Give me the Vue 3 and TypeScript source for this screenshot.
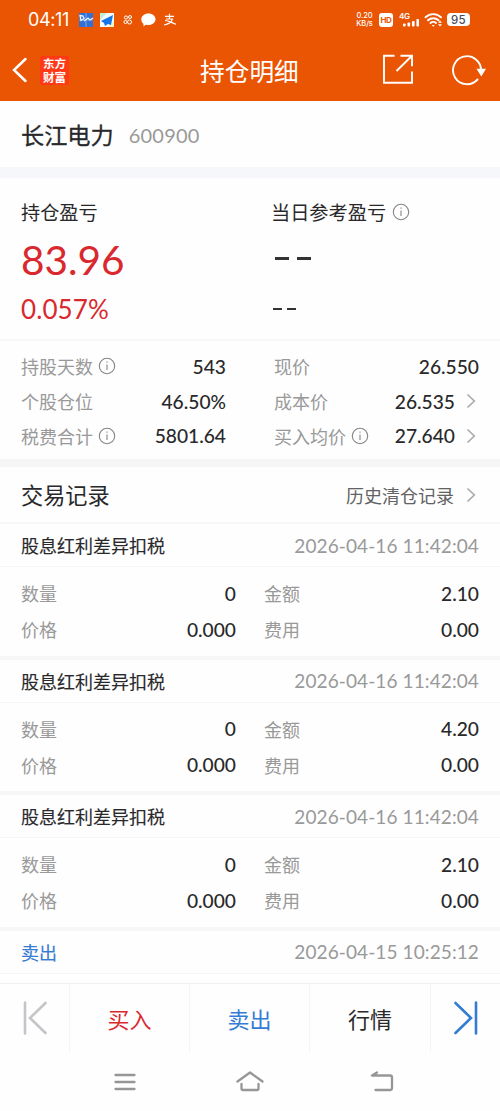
<script setup lang="ts">
interface Stat { label: string; value: string; info?: boolean; link?: boolean }
interface TradeRecord { title: string; time: string; amount: string }

const leftStats: Stat[] = [
  { label: '持股天数', value: '543', info: true },
  { label: '个股仓位', value: '46.50%' },
  { label: '税费合计', value: '5801.64', info: true },
]
const rightStats: Stat[] = [
  { label: '现价', value: '26.550' },
  { label: '成本价', value: '26.535', link: true },
  { label: '买入均价', value: '27.640', info: true, link: true },
]
const records: TradeRecord[] = [
  { title: '股息红利差异扣税', time: '2026-04-16 11:42:04', amount: '2.10' },
  { title: '股息红利差异扣税', time: '2026-04-16 11:42:04', amount: '4.20' },
  { title: '股息红利差异扣税', time: '2026-04-16 11:42:04', amount: '2.10' },
]
</script>

<template>
  <div class="screen">
    <header class="top">
      <div class="status">
        <span class="clock">04:11</span>
        <svg class="apps" width="100" height="16" viewBox="0 0 100 16">
          <rect x="0" y="1" width="14" height="14" fill="#3470d4" />
          <path d="M7 1v14M0 8h14" stroke="#7aa5ec" stroke-width="1" />
          <path d="M1 3.500l3 .5 1 2.500-3 2zM5 9l4-3 2 2 3-2" fill="none" stroke="#e8f5ff" stroke-width="1.300" />
          <rect x="21" y="1" width="14" height="14" fill="#f4fbff" />
          <path d="M21 1h7l-7 7z" fill="#bfefdc" /><path d="M29 15h6V9z" fill="#fff2b8" />
          <path d="M34 3L22 9l3 2 1 3 3-2 3 1z" fill="#1677e8" />
          <g fill="none" stroke="#fff" stroke-width="1">
            <circle cx="47" cy="5.500" r="1.600" /><circle cx="51" cy="5" r="1.500" />
            <circle cx="46.500" cy="10" r="1.600" /><circle cx="50.500" cy="10" r="2" />
          </g>
          <path d="M69.500 1.600c4 0 7 2.500 7 5.700s-3 5.800-7 5.800l-2.800-.3L64.500 14.500v-2.700c-1.400-1-2.200-2.600-2.200-4.300C62.300 4 65.500 1.600 69.500 1.600z" fill="#fff" />
          <path d="M86 4.300h9M90.500 1.800v5M87 7h6.500c-1 3-4 5.300-8.500 6M86 8.500c4 .2 7 2.500 11 3.800" fill="none" stroke="#fff" stroke-width="1.200" />
        </svg>
        <div class="speed"><span>0.20</span><span>KB/s</span></div>
        <span class="hd">HD</span>
        <div class="mobile">
          <span>4G</span>
          <svg width="20" height="15" viewBox="0 0 20 15" fill="#fff">
            <rect x="4" y="11.500" width="2.600" height="3" rx=".8" /><rect x="8.500" y="10.500" width="2.600" height="4" rx=".8" />
            <rect x="13" y="9" width="2.600" height="5.500" rx=".8" /><rect x="17.400" y="7" width="2.600" height="7.500" rx=".8" />
          </svg>
        </div>
        <svg class="wifi" width="20" height="16" viewBox="0 0 20 16">
          <g fill="none" stroke="#fff" stroke-width="1.900" stroke-linecap="round">
            <path d="M1.500 5.300c4.500-4.300 11-4.300 15.500 0M4 8.300c3-2.800 7.500-2.800 10.500 0M6.500 11c1.500-1.500 4-1.500 5.500 0" />
          </g>
          <path d="M7.600 13h3.300l-1.600 1.800zM14 10.800l2-2.200 2 2.200zM14 12.300l2 2.200 2-2.200z" fill="#fff" />
        </svg>
        <span class="battery">95</span>
      </div>
      <div class="nav">
        <svg class="back" width="16" height="26" viewBox="0 0 16 26"><path d="M13.500 2L2 13l11.500 11" fill="none" stroke="#fff" stroke-width="2.500" stroke-linecap="round" /></svg>
        <div class="brand"><span>东方</span><span>财富</span></div>
        <h1>持仓明细</h1>
        <svg class="share" width="32" height="32" viewBox="0 0 32 32" fill="none" stroke="#fff" stroke-width="1.900">
          <path d="M12.500 1.700H2v27h28V17.500M18.500 1.700H30v10.500M29.500 2.200L14.500 17" />
        </svg>
        <svg class="refresh" width="36" height="32" viewBox="0 0 36 32">
          <path d="M30 17A14 14 0 1 0 26.500 25.500" fill="none" stroke="#fff" stroke-width="1.900" stroke-linecap="round" />
          <path d="M25.500 14.800h9.500l-4.700 7.700z" fill="#fff" />
        </svg>
      </div>
    </header>

    <section class="stock"><b>长江电力</b><span>600900</span></section>

    <section class="profit">
      <div>
        <p class="caption">持仓盈亏</p>
        <p class="gain">83.96</p>
        <p class="rate">0.057%</p>
      </div>
      <div>
        <p class="caption">当日参考盈亏
          <svg class="info" width="18" height="18" viewBox="0 0 18 18"><circle cx="9" cy="9" r="7.700" /><path d="M9 7.500v5.500M9 4.500v1.300" /></svg>
        </p>
        <p class="dash big"><i></i><i></i></p>
        <p class="dash"><i></i><i></i></p>
      </div>
    </section>

    <section class="stats">
      <div v-for="(col, c) in [leftStats, rightStats]" :key="c" class="stat-col">
        <div v-for="s in col" :key="s.label" class="stat">
          <span class="label">{{ s.label }}</span>
          <svg v-if="s.info" class="info" width="18" height="18" viewBox="0 0 18 18"><circle cx="9" cy="9" r="7.700" /><path d="M9 7.500v5.500M9 4.500v1.300" /></svg>
          <span class="value">{{ s.value }}</span>
          <svg v-if="s.link" class="chev" width="10" height="16" viewBox="0 0 10 16"><path d="M1.500 1.500L8.300 8l-6.800 6.500" /></svg>
        </div>
      </div>
    </section>

    <section class="history">
      <h2>交易记录</h2>
      <span>历史清仓记录</span>
      <svg class="chev" width="10" height="16" viewBox="0 0 10 16"><path d="M1.500 1.500L8.300 8l-6.800 6.500" /></svg>
    </section>

    <main class="records">
      <article v-for="(r, i) in records" :key="i" class="record">
        <div class="record-head"><b>{{ r.title }}</b><time>{{ r.time }}</time></div>
        <dl>
          <dt>数量</dt><dd>0</dd><dt>金额</dt><dd>{{ r.amount }}</dd>
          <dt>价格</dt><dd>0.000</dd><dt>费用</dt><dd>0.00</dd>
        </dl>
      </article>
      <article class="record">
        <div class="record-head sell"><b>卖出</b><time>2026-04-15 10:25:12</time></div>
      </article>
    </main>

    <footer class="actions">
      <div class="edge"><svg width="26" height="36" viewBox="0 0 26 36"><path d="M3 2.500v31M23.500 3L8 18l15.500 15" stroke="#c4c5c9" /></svg></div>
      <div class="buy">买入</div>
      <div class="sell">卖出</div>
      <div>行情</div>
      <div class="edge"><svg width="26" height="36" viewBox="0 0 26 36"><path d="M23 2.500v31M2.500 3L18 18l-15.500 15" stroke="#347bd4" /></svg></div>
    </footer>
    <div class="system">
      <svg width="22" height="20" viewBox="0 0 22 20"><path d="M1.500 3h19M1.500 10h19M1.500 17h19" /></svg>
      <svg width="28" height="22" viewBox="0 0 28 22"><path d="M1.500 10.500L14 1.500l12.500 9M5.500 13v4.500q0 1.500 1.500 1.500h14q1.500 0 1.500-1.500v-4.500" /></svg>
      <svg width="24" height="22" viewBox="0 0 24 22"><path d="M7 1.500L2 4.500h18q2 0 2 2v10.500q0 2-2 2H5.500" /></svg>
    </div>
  </div>
</template>

<style>
body { margin: 0; background: #fff; }
</style>
<style scoped>
* { box-sizing: border-box; }
p, h1, h2, dl, dd { margin: 0; }
b, h1, h2 { font-weight: 400; }
b { -webkit-text-stroke: .15px currentColor; }
.screen { width: 500px; height: 1111px; overflow: hidden; display: flex; flex-direction: column; background: #fefefe; color: #29292b; font-family: Lato, "Noto Sans CJK SC", sans-serif; font-size: 18px; }
.screen > * { flex-shrink: 0; }
.top { height: 101px; background: #ea5504; color: #fff; }
.status { height: 39px; display: flex; align-items: center; padding-left: 28px; font-family: Inter, sans-serif; }
.clock { width: 51px; font-size: 18px; letter-spacing: -.4px; white-space: nowrap; }
.speed { display: flex; flex-direction: column; align-items: center; width: 19px; margin-left: 176px; font-size: 7.500px; line-height: 8px; font-weight: 500; letter-spacing: -.1px; }
.hd { width: 14px; height: 14px; margin-left: 5px; border-radius: 3px; background: #fff; color: #ea5504; font-size: 8px; font-weight: 700; line-height: 14px; text-align: center; letter-spacing: -.4px; }
.mobile { display: grid; width: 20px; height: 16px; margin-left: 6px; }
.mobile > * { grid-area: 1 / 1; }
.mobile span { font-size: 8px; line-height: 8px; font-weight: 600; letter-spacing: -.3px; }
.wifi { margin-left: 5px; }
.battery { width: 23px; height: 13px; margin-left: 3px; border-radius: 4px; background: #fff; color: #4b4b58; font-size: 11.500px; font-weight: 500; line-height: 14px; text-align: center; letter-spacing: .2px; }
.nav { height: 62px; display: flex; align-items: center; padding-left: 12px; }
.brand { width: 29px; height: 29px; margin-left: 12px; border-radius: 3px; background: #ff3818; display: flex; flex-direction: column; align-items: center; justify-content: center; font: 700 11.500px/14px "Noto Sans CJK SC", sans-serif; }
h1 { margin: 3px 0 0 131px; width: 99px; font-size: 24.700px; line-height: 36px; white-space: nowrap; }
.share { margin-left: 83px; }
.refresh { margin-left: 37px; }
.stock { height: 77px; border-bottom: 11px solid #f5f7fa; padding: 0 21px; display: flex; align-items: center; font-size: 23.200px; }
.stock b { line-height: 34px; margin-bottom: -1px; -webkit-text-stroke-width: .3px; }
.stock span { margin: 1px 0 0 15px; font-size: 20px; letter-spacing: .2px; color: #999; }
.profit { height: 163px; padding: 21px 21px 0; display: grid; grid-template-columns: 250px 1fr; border-bottom: 2px solid #f7f7f7; }
.caption { height: 26px; display: flex; align-items: center; gap: 6px; font-size: 19.200px; white-space: nowrap; }
.gain { height: 71px; line-height: 69px; font-size: 40.500px; color: #d9292f; }
.rate { height: 28px; line-height: 27px; font-size: 26px; letter-spacing: .1px; color: #d9292f; }
.info { fill: none; stroke: #858585; stroke-width: 1.100; }
.dash { display: flex; align-items: center; gap: 5px; height: 28px; padding-left: 2px; }
.dash i { width: 9px; height: 2px; background: #333; }
.dash.big { height: 67px; margin-bottom: 3px; gap: 8px; padding-left: 4px; }
.dash.big i { width: 14px; height: 3px; }
.stats { height: 126px; padding: 8px 21px 0; display: grid; grid-template-columns: 205px 205px; justify-content: space-between; border-bottom: 8px solid #f6f6f6; }
.stat { display: flex; align-items: center; height: 34.700px; }
.label, dt { color: #999; }
.stat .info { margin-left: 5px; }
.value, dd { font-weight: 500; font-size: 19.200px; }
.value { margin-left: auto; }
.chev { fill: none; stroke: #ababab; stroke-width: 1.700; }
.stat .chev { margin: 0 3px 0 11px; }
.history { height: 57px; padding: 0 24px 0 21px; display: flex; align-items: center; border-bottom: 2px solid #f7f7f7; }
h2 { font-size: 22.200px; margin: 0 auto 2px 0; }
.history span { color: #626262; }
.history .chev { margin-left: 12px; }
.records { height: 459px; overflow: hidden; }
.record { height: 135.500px; border-bottom: 4px solid #f7f7f7; }
.record-head { height: 43px; padding: 0 21px; display: flex; align-items: center; justify-content: space-between; border-bottom: 1px solid #f6f6f6; }
time { color: #999; font-size: 19px; letter-spacing: .1px; }
dl { padding: 8px 21px 0; display: grid; grid-template-columns: 50px 165px 78px 1fr; grid-auto-rows: 36px; align-items: center; }
dt:nth-of-type(even) { padding-left: 28px; white-space: nowrap; }
dd { text-align: right; }
.sell { color: #347bd4; }
.sell time { color: #999; }
.buy { color: #d9292f; }
.actions { height: 69px; display: grid; grid-template-columns: 70px 120px 120px 121px 69px; border-top: 1px solid #f0f0f0; font-size: 22px; }
.actions > div { display: flex; align-items: center; justify-content: center; border-right: 1px solid #f4f4f4; }
.actions > div:last-child { border: 0; }
.edge path { fill: none; stroke-width: 2.600; stroke-linecap: round; }
.system { height: 59px; display: flex; align-items: center; justify-content: center; gap: 105px; padding-left: 8px; }
.system svg:nth-child(2) { margin: 0 1px 0 -5px; }
.system path { fill: none; stroke: #969696; stroke-width: 2.300; stroke-linecap: round; stroke-linejoin: round; }
</style>
